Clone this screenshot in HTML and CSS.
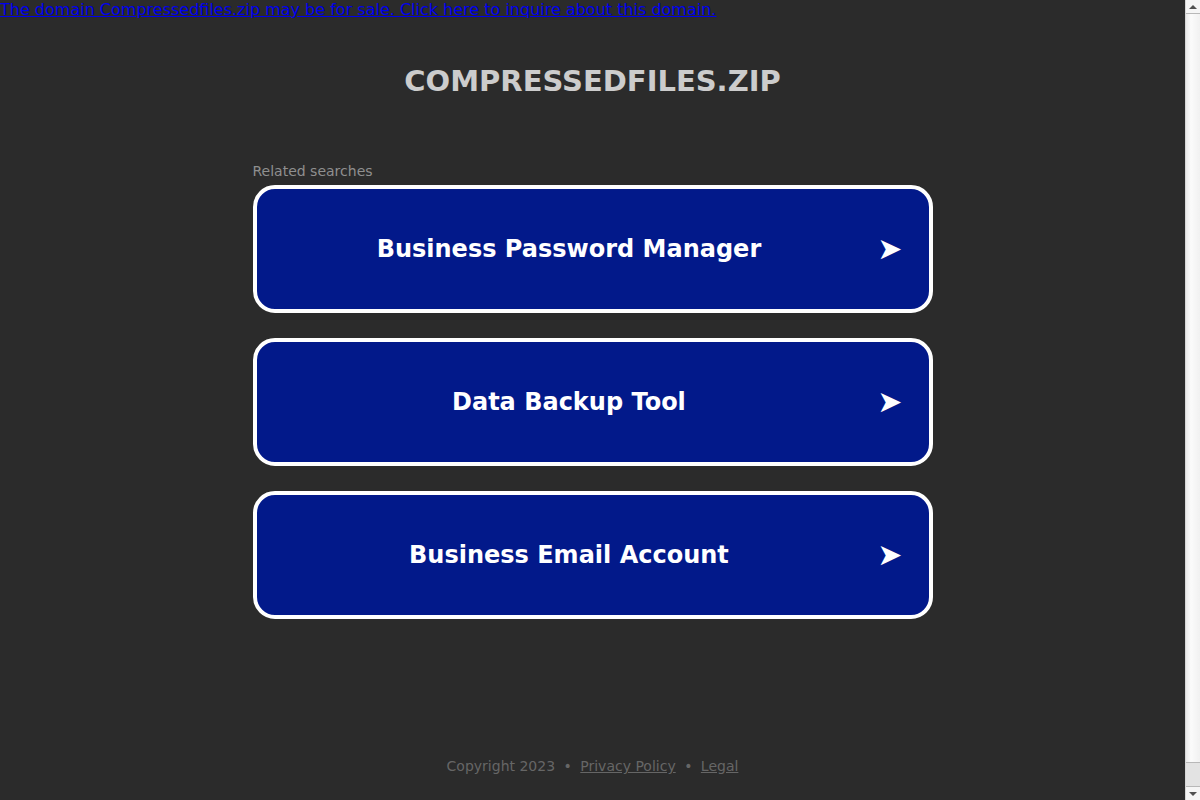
FILE: index.html
```html
<!DOCTYPE html>
<html lang="en">
<head>
    <meta charset="UTF-8">
    <meta name="viewport" content="width=device-width, initial-scale=1.0">
    <title>compressedfiles.zip</title>
    <link rel="stylesheet" href="styles.css">
</head>
<body>
    <a class="sale-link" href="#">The domain Compressedfiles.zip may be for sale. Click here to inquire about this domain.</a>

    <main class="container">
        <h1 class="domain">compressedfiles.zip</h1>

        <section class="searches">
            <p class="searches-title">Related searches</p>
            <ul class="search-list">
                <li>
                    <a class="search-btn" href="#">
                        <span class="search-text">Business Password Manager</span>
                        <span class="search-arrow">&#10148;</span>
                    </a>
                </li>
                <li>
                    <a class="search-btn" href="#">
                        <span class="search-text">Data Backup Tool</span>
                        <span class="search-arrow">&#10148;</span>
                    </a>
                </li>
                <li>
                    <a class="search-btn" href="#">
                        <span class="search-text">Business Email Account</span>
                        <span class="search-arrow">&#10148;</span>
                    </a>
                </li>
            </ul>
        </section>
    </main>

    <footer class="site-footer">
        <span>Copyright 2023</span>
        <span class="dot">&bull;</span>
        <a href="#">Privacy Policy</a>
        <span class="dot">&bull;</span>
        <a href="#">Legal</a>
    </footer>

    <!-- page scrollbar -->
    <div class="scrollbar">
        <div class="scroll-btn up"><span></span></div>
        <div class="scroll-track"><div class="scroll-thumb"></div></div>
        <div class="scroll-btn down"><span></span></div>
    </div>
</body>
</html>
```

FILE: styles.css
```css
* {
    margin: 0;
    padding: 0;
    box-sizing: border-box;
}

html {
    overflow: hidden;
}

body {
    background-color: #2b2b2b;
    font-family: 'DejaVu Sans', sans-serif;
    height: 800px;
    padding-right: 15px;
    display: flex;
    flex-direction: column;
}

.sale-link {
    display: block;
    font-size: 16px;
    line-height: 19px;
    color: #0000ee;
}

.container {
    flex: 1;
}

.domain {
    text-transform: uppercase;
    text-align: center;
    color: #cccccc;
    font-size: 29px;
    font-weight: bold;
    margin-top: 42px;
    line-height: 40px;
}

.searches {
    width: 680px;
    margin: 61px auto 0;
}

.searches-title {
    color: #8f8f8f;
    font-size: 14px;
    line-height: 18px;
    margin-bottom: 5px;
}

.search-list {
    list-style: none;
    display: flex;
    flex-direction: column;
    gap: 25px;
}

.search-btn {
    display: flex;
    align-items: center;
    height: 128px;
    background-color: #02198a;
    border: 4px solid #ffffff;
    border-radius: 22px;
    color: #ffffff;
    text-decoration: none;
}

.search-text {
    flex: 1;
    text-align: center;
    font-size: 24px;
    font-weight: bold;
    margin-left: 4px;
}

.search-arrow {
    font-size: 30px;
    line-height: 30px;
    margin-right: 26px;
}

.site-footer {
    text-align: center;
    font-size: 14px;
    color: #666666;
    padding-bottom: 26px;
}

.site-footer a {
    color: #666666;
}

.dot {
    margin: 0 4px;
}

.scrollbar {
    position: fixed;
    top: 0;
    right: 0;
    width: 15px;
    height: 100%;
    display: flex;
    flex-direction: column;
    border-left: 1px solid #d6d6d6;
    background: linear-gradient(to right, #eaeaea, #fbfbfb 35%, #f1f1f1);
}

.scroll-btn {
    height: 14px;
    display: flex;
    align-items: center;
    justify-content: center;
    background-color: #f5f5f5;
}

.scroll-btn.up {
    border-bottom: 1px solid #b8b8b8;
}

.scroll-btn.down {
    border-top: 1px solid #b8b8b8;
}

.scroll-btn span {
    width: 0;
    height: 0;
    border-left: 4px solid transparent;
    border-right: 4px solid transparent;
}

.scroll-btn.up span {
    border-bottom: 4px solid #505050;
}

.scroll-btn.down span {
    border-top: 4px solid #505050;
}

.scroll-track {
    flex: 1;
    display: flex;
    flex-direction: column;
    justify-content: flex-end;
}

.scroll-thumb {
    height: 24px;
    background-color: #e3e3e3;
    border-top: 1px solid #b8b8b8;
}
```
